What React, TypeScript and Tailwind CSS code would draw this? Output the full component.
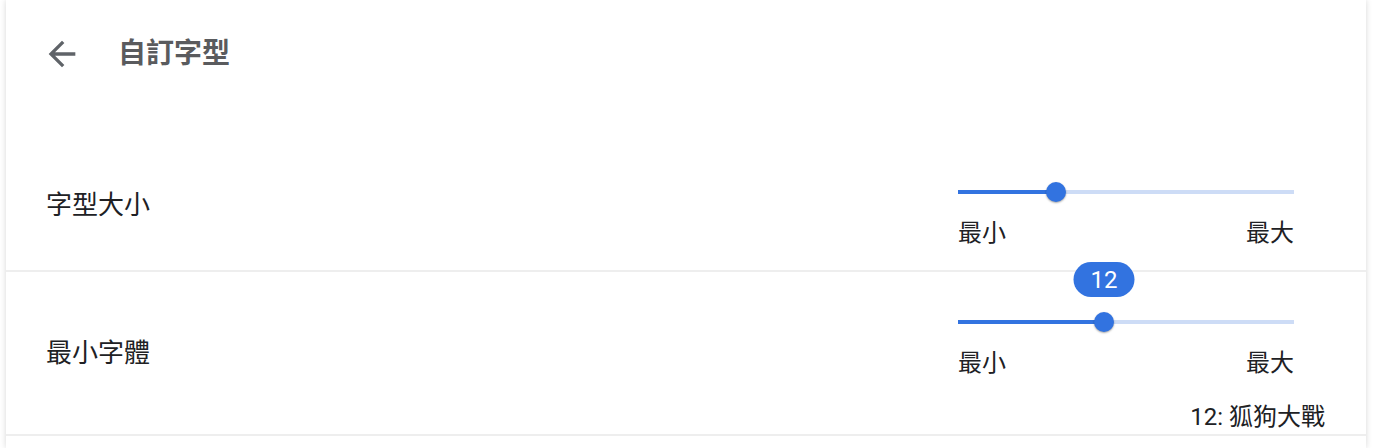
import React from "react";

function Slider({ pos, badge }: { pos: number; badge?: string }) {
  return (
    <div className="w-[336px] mr-[32px]">
      <div className="relative h-[20px]">
        <div className="absolute left-0 right-0 top-[8px] h-[4px] bg-[#cddcf6]" />
        <div className="absolute left-0 top-[8px] h-[4px] bg-[#3273e0]" style={{ width: pos }} />
        <div
          className="absolute top-0 h-[20px] w-[20px] rounded-full bg-[#3273e0] shadow-[0_1px_2px_rgba(0,0,0,0.35)]"
          style={{ left: pos - 10 }}
        >
          {badge && (
            <div className="absolute bottom-[35px] left-1/2 -translate-x-1/2 h-[35px] w-[61px] rounded-full bg-[#3273e0] text-white text-[24px] leading-none flex items-center justify-center">
              {badge}
            </div>
          )}
        </div>
      </div>
      <div className="mt-[16px] flex justify-between text-[24px] leading-[30px] text-[#202124]">
        <span>最小</span>
        <span>最大</span>
      </div>
    </div>
  );
}

export default function App() {
  return (
    <div className="min-h-screen bg-white font-[family-name:Roboto,'Noto_Sans_CJK_TC',sans-serif]">
      <div className="ml-[6px] mr-[12px] min-h-[448px] bg-white shadow-[0_0_6px_rgba(0,0,0,0.16)]">
        <div className="h-[108px] flex items-center pl-[36px]">
          <svg width="40" height="40" viewBox="0 0 24 24" fill="#5f6368">
            <path d="M20 11H7.83l5.59-5.59L12 4l-8 8 8 8 1.41-1.41L7.83 13H20v-2z" />
          </svg>
          <div className="ml-[36px] text-[28px] leading-[36px] font-bold text-[#5a5b5e]">自訂字型</div>
        </div>

        <div className="h-[164px] border-b-2 border-[#eeeeee] flex justify-between pl-[40px] pr-[40px]">
          <div className="pt-[81px] text-[26px] leading-[32px] text-[#202124]">字型大小</div>
          <div className="pt-[74px] flex flex-col items-end">
            <Slider pos={98} />
          </div>
        </div>

        <div className="h-[164px] border-b-2 border-[#eeeeee] flex justify-between pl-[40px] pr-[40px]">
          <div className="pt-[65px] text-[26px] leading-[32px] text-[#202124]">最小字體</div>
          <div className="pt-[40px] flex flex-col items-end">
            <Slider pos={146} badge="12" />
            <div className="mt-[24px] mr-[1px] text-[24px] leading-[30px] text-[#202124]">12: 狐狗大戰</div>
          </div>
        </div>
      </div>
    </div>
  );
}
